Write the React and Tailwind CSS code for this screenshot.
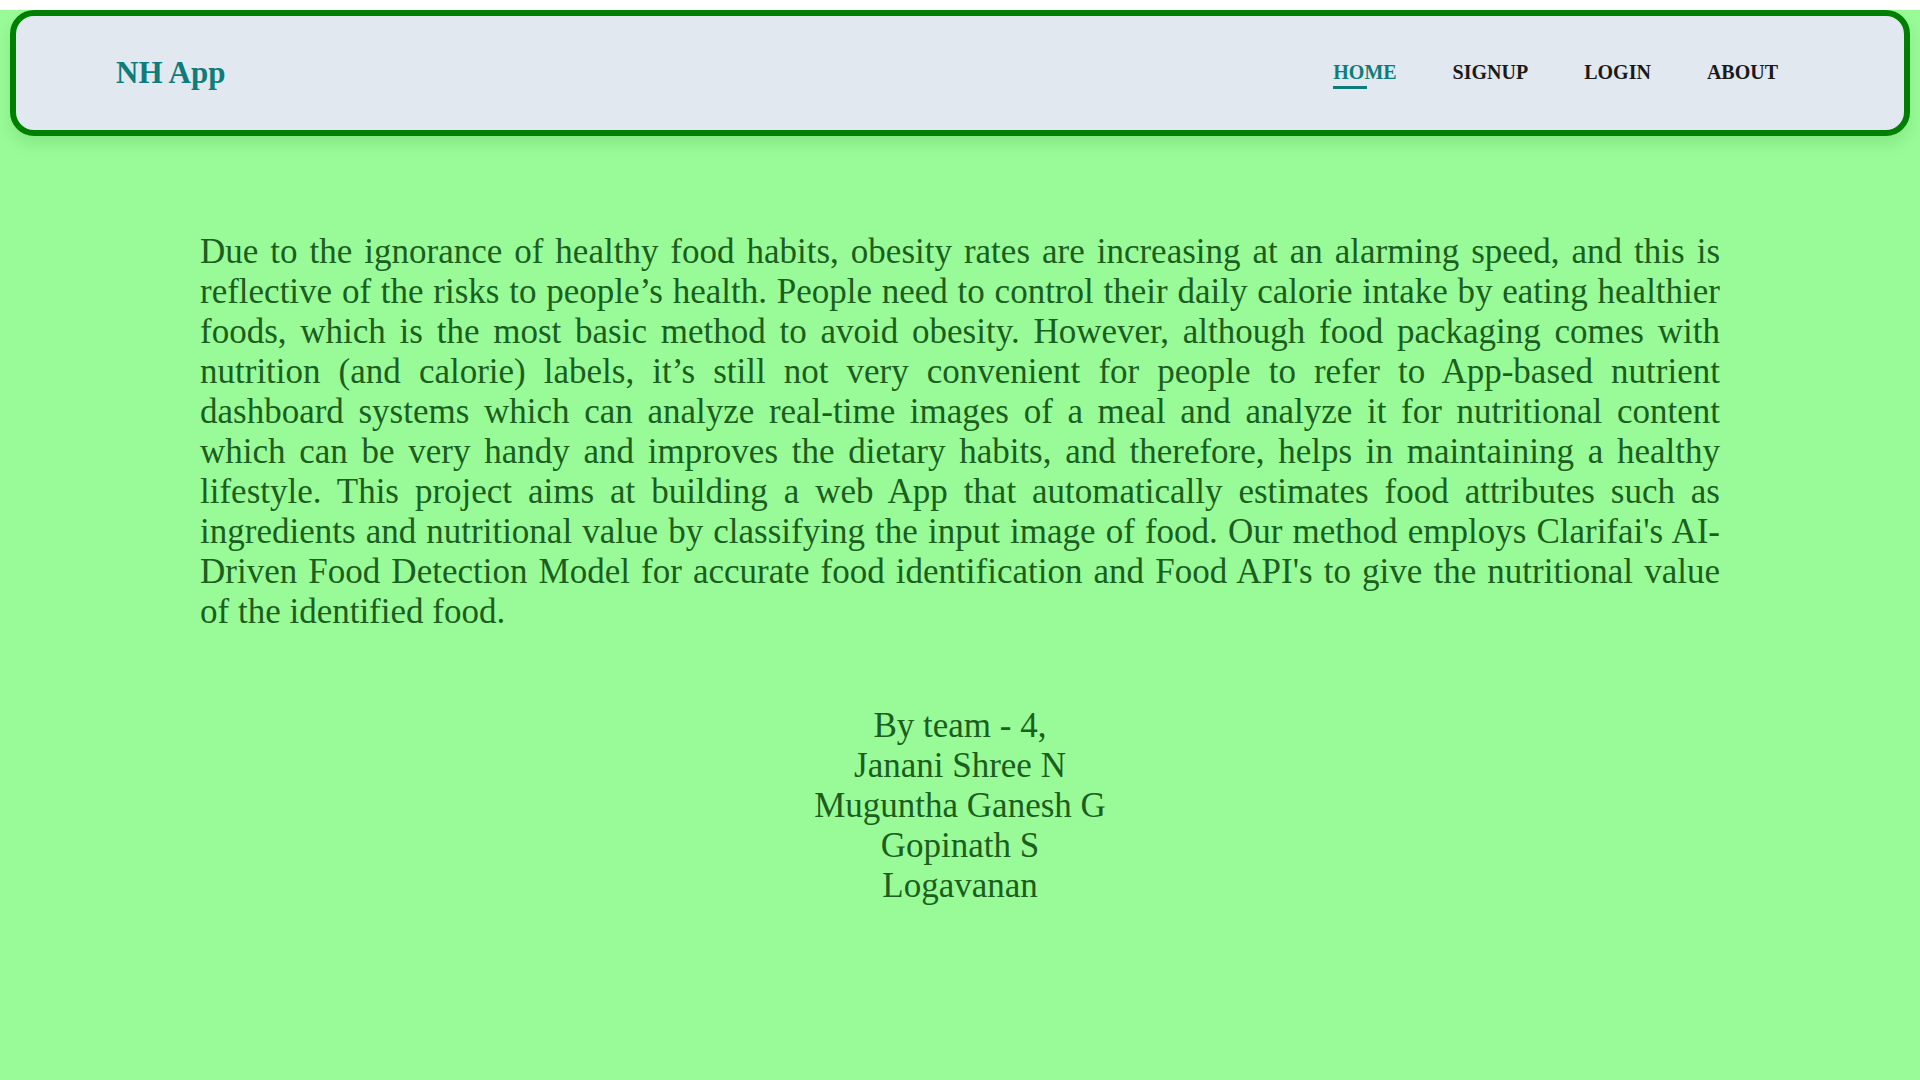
const navLinks = ["HOME", "SIGNUP", "LOGIN", "ABOUT"];

const team = [
  "By team - 4,",
  "Janani Shree N",
  "Muguntha Ganesh G",
  "Gopinath S",
  "Logavanan",
];

const Navbar = () => {
  return (
    <nav className="m-[10px] flex h-[126px] items-center justify-between rounded-[24px] border-[6px] border-[#008000] bg-[#e2e8f0] pl-[100px] pr-[126px] shadow-[0_8px_16px_rgba(0,100,0,0.12)]">
      <h1 className="text-[31px] font-bold text-[#0f7c7c]">NH App</h1>
      <ul className="-mt-[2px] flex items-center gap-[56px]">
        {navLinks.map((link, i) => (
          <li key={link} className="relative">
            <a
              href="#"
              className={
                i === 0
                  ? "text-[20px] font-bold text-[#0f7c7c]"
                  : "text-[20px] font-bold text-[#1a1a1a]"
              }
            >
              {link}
            </a>
            {i === 0 && (
              <span className="absolute left-0 top-[29px] h-[3px] w-[34px] bg-[#0f7c7c]" />
            )}
          </li>
        ))}
      </ul>
    </nav>
  );
};

export default function App() {
  return (
    <div className="min-h-screen bg-[#98fb98] pb-20 font-['Liberation_Serif',_'Times_New_Roman',_serif] text-[#1b5e20]">
      <Navbar />

      <main className="px-[200px] pt-[86px]">
        <p className="text-justify text-[35px] leading-[40px]">
          Due to the ignorance of healthy food habits, obesity rates are
          increasing at an alarming speed, and this is reflective of the risks
          to people’s health. People need to control their daily calorie intake
          by eating healthier foods, which is the most basic method to avoid
          obesity. However, although food packaging comes with nutrition (and
          calorie) labels, it’s still not very convenient for people to refer to
          App-based nutrient dashboard systems which can analyze real-time
          images of a meal and analyze it for nutritional content which can be
          very handy and improves the dietary habits, and therefore, helps in
          maintaining a healthy lifestyle. This project aims at building a web
          App that automatically estimates food attributes such as ingredients
          and nutritional value by classifying the input image of food. Our
          method employs Clarifai's AI-Driven Food Detection Model for accurate
          food identification and Food API's to give the nutritional value of
          the identified food.
        </p>

        <div className="mt-[74px] flex flex-col items-center text-[35px] leading-[40px]">
          {team.map((name) => (
            <span key={name}>{name}</span>
          ))}
        </div>
      </main>
    </div>
  );
}
